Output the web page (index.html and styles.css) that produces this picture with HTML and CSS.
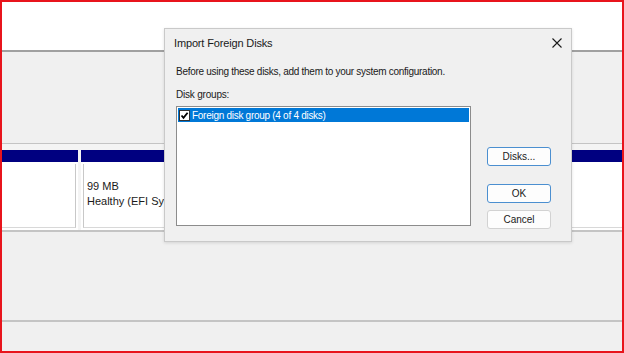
FILE: index.html
```html
<!DOCTYPE html>
<html lang="en">
<head>
    <meta charset="UTF-8">
    <meta name="viewport" content="width=device-width, initial-scale=1.0">
    <title>Import Foreign Disks</title>
    <link rel="stylesheet" href="styles.css">
</head>
<body>
    <div class="frame">
        <div class="top-pane"></div>
        <div class="bottom-pane">
            <div class="disk-row">
                <div class="cell cell-info">
                    <div class="cell-bar"></div>
                    <div class="cell-body"></div>
                </div>
                <div class="cell cell-part">
                    <div class="cell-bar"></div>
                    <div class="cell-body">
                        <div>99 MB</div>
                        <div>Healthy (EFI System Partition)</div>
                    </div>
                </div>
                <div class="cell cell-rest">
                    <div class="cell-bar"></div>
                    <div class="cell-body"></div>
                </div>
            </div>
            <div class="legend"></div>
        </div>

        <!-- dialog over the disk view -->
        <div class="dialog">
            <div class="dialog-title">
                <span>Import Foreign Disks</span>
                <svg class="close" width="10" height="10" viewBox="0 0 10 10">
                    <path d="M0.5 0.5 L9.5 9.5 M9.5 0.5 L0.5 9.5" stroke="#1a1a1a" stroke-width="1.1" fill="none"/>
                </svg>
            </div>
            <div class="dialog-body">
                <div class="dialog-main">
                    <p class="intro">Before using these disks, add them to your system configuration.</p>
                    <p class="label">Disk groups:</p>
                    <div class="listbox">
                        <div class="list-item selected">
                            <span class="check">
                                <svg width="9" height="9" viewBox="0 0 9 9">
                                    <path d="M1.5 4.5 L3.5 6.8 L7.6 1.8" stroke="#000" stroke-width="1.8" fill="none"/>
                                </svg>
                            </span>
                            <span>Foreign disk group (4 of 4 disks)</span>
                        </div>
                    </div>
                </div>
                <div class="dialog-buttons">
                    <button class="btn btn-accent btn-disks">Disks...</button>
                    <button class="btn btn-accent btn-ok">OK</button>
                    <button class="btn btn-cancel">Cancel</button>
                </div>
            </div>
        </div>
    </div>
</body>
</html>
```

FILE: styles.css
```css
/* whole window */
body {
    margin: 0;
    font-family: "Liberation Sans", Arial, sans-serif;
    font-size: 11px;
    color: #1a1a1a;
}

.frame {
    position: relative;
    box-sizing: border-box;
    width: 624px;
    height: 353px;
    border: 2px solid #e8141c;
    background: #f0f0f0;
    display: flex;
    flex-direction: column;
    overflow: hidden;
}

/* upper volume list pane */
.top-pane {
    height: 48px;
    background: #ffffff;
    border-bottom: 2px solid #a0a0a0;
}

/* graphical disk view */
.bottom-pane {
    flex: 1;
    display: flex;
    flex-direction: column;
    padding-top: 91px;
}

.disk-row {
    display: flex;
    gap: 3px;
    height: 80px;
    border-top: 1px solid #c4c4c4;
    border-bottom: 2px solid #c4c4c4;
    padding-top: 6px;
    background: #f4f4f4;
}

.cell {
    display: flex;
    flex-direction: column;
    background: #ffffff;
}

.cell-info { width: 76px; }
.cell-part { width: 200px; }
.cell-rest { flex: 1; }

.cell-bar {
    height: 12px;
    background: #000080;
}

.cell-body {
    flex: 1;
    margin: 2px 0 2px 2px;
    border-left: 1px solid #c8c8c8;
    border-bottom: 1px solid #d8d8d8;
    padding: 15px 0 0 3px;
    line-height: 15px;
    white-space: nowrap;
    overflow: hidden;
}

.cell-info .cell-body {
    margin: 2px 2px 2px 0;
    border-left: none;
    border-right: 1px solid #c8c8c8;
}

.legend {
    margin-top: 88px;
    border-top: 2px solid #c4c4c4;
    flex: 1;
}

/* Import Foreign Disks dialog */
.dialog {
    position: absolute;
    left: 162px;
    top: 26px;
    width: 406px;
    height: 212px;
    background: #f0f0f0;
    border: 1px solid #c9c9c9;
    box-shadow: 0 1px 3px rgba(0, 0, 0, 0.12);
    display: flex;
    flex-direction: column;
}

.dialog-title {
    height: 28px;
    display: flex;
    align-items: center;
    justify-content: space-between;
    padding: 0 9px 0 9px;
    font-size: 11px;
    letter-spacing: -0.15px;
}

.dialog-body {
    flex: 1;
    display: flex;
    padding: 0 20px 0 11px;
    gap: 16px;
}

.dialog-main {
    width: 295px;
}

.intro {
    margin: 8px 0 0;
    line-height: 14px;
    font-size: 10px;
    letter-spacing: -0.28px;
}

.label {
    margin: 9px 0 0;
    line-height: 14px;
    font-size: 10px;
    letter-spacing: -0.2px;
}

.listbox {
    margin-top: 4px;
    box-sizing: border-box;
    height: 120px;
    background: #ffffff;
    border: 1px solid #8c8c8c;
    padding: 1px;
}

.list-item {
    display: flex;
    align-items: center;
    gap: 2px;
    height: 14px;
    padding-left: 1px;
    font-size: 10px;
    letter-spacing: -0.28px;
}

.list-item.selected {
    background: #0078d7;
    color: #ffffff;
}

.check {
    width: 9px;
    height: 9px;
    background: #ffffff;
    border: 1px solid #333;
    display: flex;
}

.dialog-buttons {
    display: flex;
    flex-direction: column;
    width: 64px;
}

.btn {
    box-sizing: border-box;
    height: 19px;
    font-family: inherit;
    font-size: 10px;
    color: #1a1a1a;
    background: #fdfdfd;
    border-radius: 3px;
    padding: 0;
}

.btn-accent {
    border: 1px solid #4b8fd0;
}

.btn-cancel {
    border: 1px solid #d2d2d2;
    margin-top: 7px;
}

.btn-disks { margin-top: 90px; }
.btn-ok { margin-top: 18px; }
```
